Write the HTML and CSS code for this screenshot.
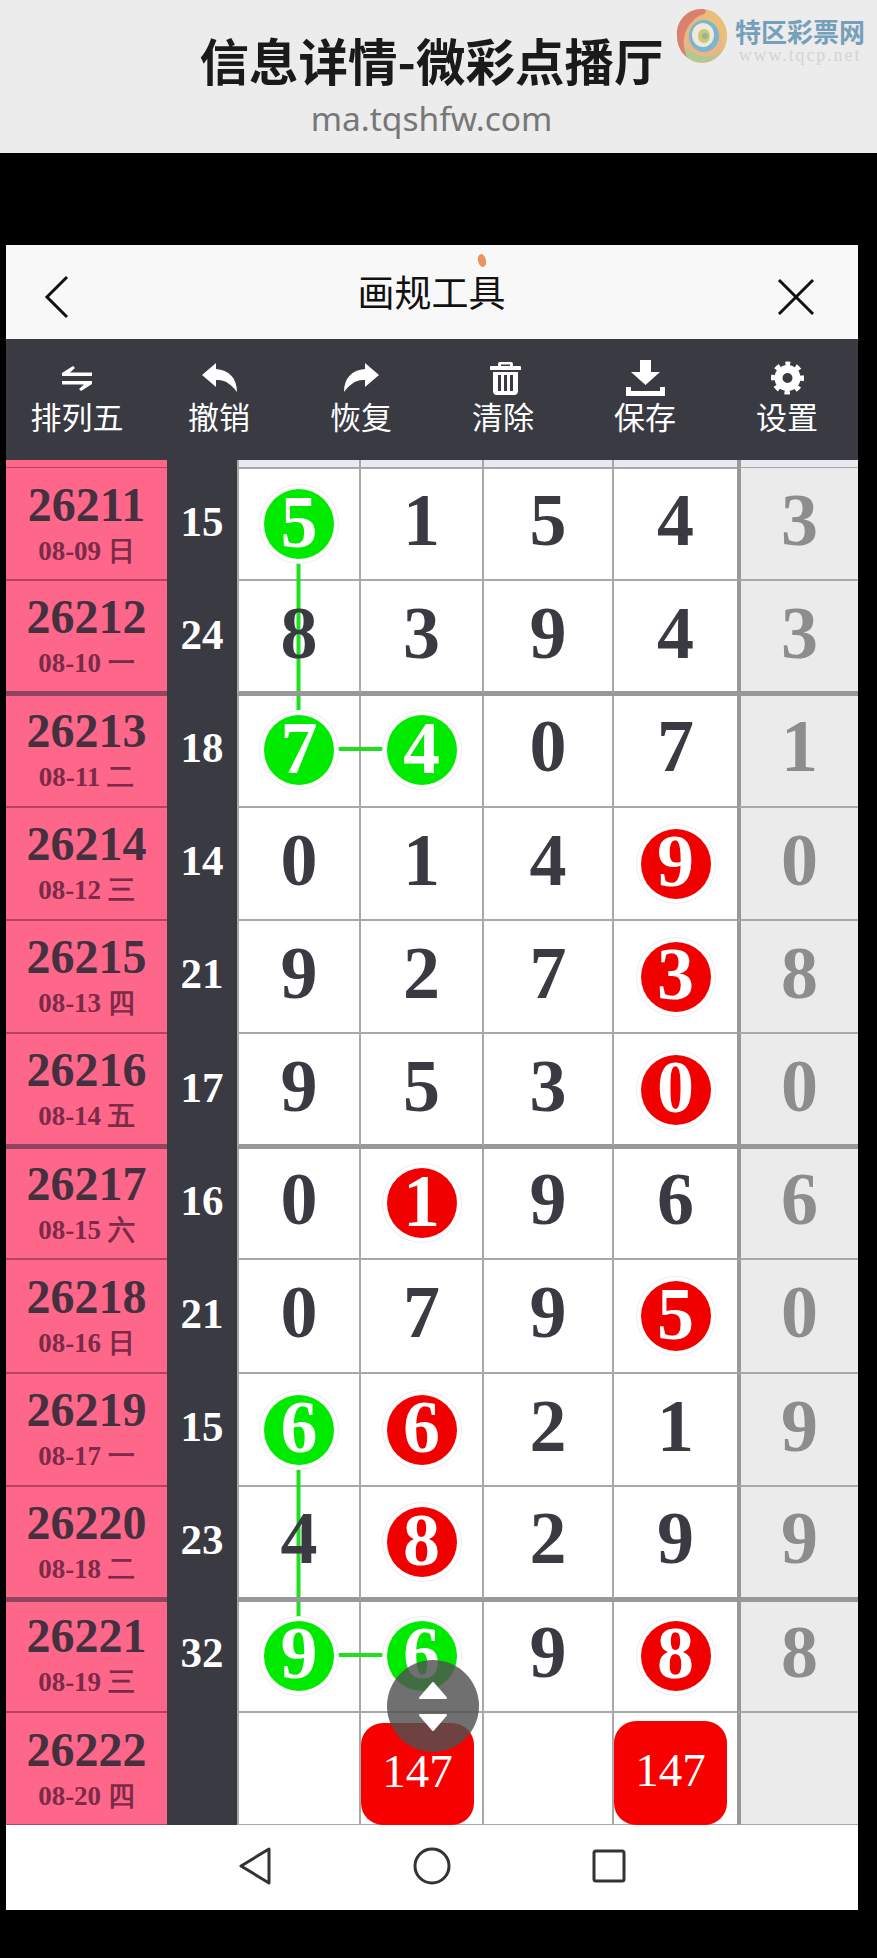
FILE: index.html
```html
<!DOCTYPE html>
<html>
<head>
    <title>画规工具</title>
    <link rel="stylesheet" href="styles.css">
</head>
<body>
    <header class="site-header">
        <h1 class="site-title">信息详情-微彩点播厅</h1>
        <p class="site-url">ma.tqshfw.com</p>
        <div class="watermark">
            <svg class="watermark-swirl" width="52" height="56" viewBox="0 0 52 56">
                <ellipse cx="26" cy="28" rx="25" ry="27" fill="#e8b27a"/>
                <path d="M28 1C10 0 0 14 1 28c0 10 5 18 11 22C6 40 6 26 14 16c4-5 10-10 18-11z" fill="#d8765f"/>
                <path d="M30 3c12 2 21 12 21 25 0 6-2 10-4 14 1-12-5-26-21-30z" fill="#e9bb6e"/>
                <path d="M10 48c10 10 28 8 37-6-7 8-23 10-37-2z" fill="#a9c68b"/>
                <ellipse cx="28" cy="28" rx="15" ry="16" fill="#6fb0d0"/>
                <ellipse cx="27" cy="27" rx="11" ry="12" fill="#efe9d6"/>
                <ellipse cx="28" cy="28" rx="6" ry="7" fill="#c9c36c"/>
                <circle cx="29" cy="28" r="3" fill="#8db08a"/>
            </svg>
            <div class="watermark-text">
                <span class="watermark-name">特区彩票网</span>
                <span class="watermark-site">www.tqcp.net</span>
            </div>
        </div>
    </header>

    <div class="gap-top"></div>

    <div class="app">
        <div class="title-bar">
            <svg class="nav-icon" width="26" height="44" viewBox="0 0 26 44">
                <path d="M23 2 3 22l20 20" fill="none" stroke="#111" stroke-width="3"/>
            </svg>
            <span class="title-text">画规工具</span>
            <svg class="nav-icon" width="38" height="38" viewBox="0 0 38 38">
                <path d="M2 2l34 34M36 2 2 36" fill="none" stroke="#111" stroke-width="3"/>
            </svg>
            <span class="title-dot"></span>
        </div>

        <div class="toolbar">
            <div class="tool">
                <svg width="40" height="38" viewBox="0 0 40 38">
                    <path d="M16 8 5 15v3h30v-3.500H13l5-4.500zM24 33l11-7v-3H5v3.500h22l-5 4.500z" fill="#fff"/>
                </svg>
                <span>排列五</span>
            </div>
            <div class="tool">
                <svg width="40" height="38" viewBox="0 0 40 38">
                    <path d="M17 5 3 17l14 12v-7c9-1 16 5 21 12 0-14-8-22-21-23z" fill="#fff"/>
                </svg>
                <span>撤销</span>
            </div>
            <div class="tool">
                <svg width="40" height="38" viewBox="0 0 40 38">
                    <path d="M24 5l14 12-14 12v-7c-9-1-16 5-21 12 0-14 8-22 21-23z" fill="#fff"/>
                </svg>
                <span>恢复</span>
            </div>
            <div class="tool">
                <svg width="40" height="38" viewBox="0 0 40 38">
                    <path fill-rule="evenodd" d="M17 4h11a2 2 0 0 1 2 2v2h7a1 1 0 0 1 1 1v3H7V9a1 1 0 0 1 1-1h7V6a2 2 0 0 1 2-2zm1 2.500V8h9V6.500zM10 14h25v19a4 4 0 0 1-4 4H14a4 4 0 0 1-4-4zm5 3v16h3V17zm6 0v16h3V17zm6 0v16h3V17z" fill="#fff"/>
                </svg>
                <span>清除</span>
            </div>
            <div class="tool">
                <svg width="40" height="38" viewBox="0 0 40 38">
                    <path d="M15 2h11v12h9L20.500 27 6 14h9zM1 29h5v4h29v-4h5v9H1z" fill="#fff"/>
                </svg>
                <span>保存</span>
            </div>
            <div class="tool">
                <svg width="40" height="38" viewBox="0 0 40 38">
                    <circle cx="20.500" cy="20" r="9" fill="none" stroke="#fff" stroke-width="8"/>
                    <circle cx="20.500" cy="20" r="14.500" fill="none" stroke="#fff" stroke-width="4" stroke-dasharray="5.500 5.890" stroke-dashoffset="2.750" transform="rotate(-90 20.500 20)"/>
                </svg>
                <span>设置</span>
            </div>
        </div>

        <div class="chart">
            <div class="row row-cut">
                <div class="issue"></div><div class="sum"></div>
                <div class="cell"></div><div class="cell"></div><div class="cell"></div><div class="cell"></div><div class="cell cell-last"></div>
            </div>
            <div class="row">
                <div class="issue"><b>26211</b><small>08-09 日</small></div><div class="sum">15</div>
                <div class="cell"><i class="ball ball-green">5</i></div><div class="cell">1</div><div class="cell">5</div><div class="cell">4</div><div class="cell cell-last">3</div>
            </div>
            <div class="row row-thick">
                <div class="issue"><b>26212</b><small>08-10 一</small></div><div class="sum">24</div>
                <div class="cell">8</div><div class="cell">3</div><div class="cell">9</div><div class="cell">4</div><div class="cell cell-last">3</div>
            </div>
            <div class="row">
                <div class="issue"><b>26213</b><small>08-11 二</small></div><div class="sum">18</div>
                <div class="cell"><i class="ball ball-green">7</i></div><div class="cell"><i class="ball ball-green">4</i></div><div class="cell">0</div><div class="cell">7</div><div class="cell cell-last">1</div>
            </div>
            <div class="row">
                <div class="issue"><b>26214</b><small>08-12 三</small></div><div class="sum">14</div>
                <div class="cell">0</div><div class="cell">1</div><div class="cell">4</div><div class="cell"><i class="ball ball-red">9</i></div><div class="cell cell-last">0</div>
            </div>
            <div class="row">
                <div class="issue"><b>26215</b><small>08-13 四</small></div><div class="sum">21</div>
                <div class="cell">9</div><div class="cell">2</div><div class="cell">7</div><div class="cell"><i class="ball ball-red">3</i></div><div class="cell cell-last">8</div>
            </div>
            <div class="row row-thick">
                <div class="issue"><b>26216</b><small>08-14 五</small></div><div class="sum">17</div>
                <div class="cell">9</div><div class="cell">5</div><div class="cell">3</div><div class="cell"><i class="ball ball-red">0</i></div><div class="cell cell-last">0</div>
            </div>
            <div class="row">
                <div class="issue"><b>26217</b><small>08-15 六</small></div><div class="sum">16</div>
                <div class="cell">0</div><div class="cell"><i class="ball ball-red">1</i></div><div class="cell">9</div><div class="cell">6</div><div class="cell cell-last">6</div>
            </div>
            <div class="row">
                <div class="issue"><b>26218</b><small>08-16 日</small></div><div class="sum">21</div>
                <div class="cell">0</div><div class="cell">7</div><div class="cell">9</div><div class="cell"><i class="ball ball-red">5</i></div><div class="cell cell-last">0</div>
            </div>
            <div class="row">
                <div class="issue"><b>26219</b><small>08-17 一</small></div><div class="sum">15</div>
                <div class="cell"><i class="ball ball-green">6</i></div><div class="cell"><i class="ball ball-red">6</i></div><div class="cell">2</div><div class="cell">1</div><div class="cell cell-last">9</div>
            </div>
            <div class="row row-thick">
                <div class="issue"><b>26220</b><small>08-18 二</small></div><div class="sum">23</div>
                <div class="cell">4</div><div class="cell"><i class="ball ball-red">8</i></div><div class="cell">2</div><div class="cell">9</div><div class="cell cell-last">9</div>
            </div>
            <div class="row">
                <div class="issue"><b>26221</b><small>08-19 三</small></div><div class="sum">32</div>
                <div class="cell"><i class="ball ball-green">9</i></div><div class="cell"><i class="ball ball-green">6</i></div><div class="cell">9</div><div class="cell"><i class="ball ball-red">8</i></div><div class="cell cell-last">8</div>
            </div>
            <div class="row">
                <div class="issue"><b>26222</b><small>08-20 四</small></div><div class="sum"></div>
                <div class="cell"></div><div class="cell"><span class="pick">147</span></div><div class="cell"></div><div class="cell"><span class="pick pick-high">147</span></div><div class="cell cell-last"></div>
            </div>

            <svg class="lines" width="852" height="1365" viewBox="0 0 852 1365">
                <path d="M292.500 102V250M332 289H378M292.500 1010V1159M332 1195H378" fill="none" stroke="#1fe01f" stroke-width="4"/>
            </svg>

            <div class="float-btn">
                <svg width="30" height="19" viewBox="0 0 30 19">
                    <path d="M15 2 28 17H2z" fill="#fff" stroke="#fff" stroke-width="2" stroke-linejoin="round"/>
                </svg>
                <svg width="30" height="19" viewBox="0 0 30 19">
                    <path d="M15 17 28 2H2z" fill="#fff" stroke="#fff" stroke-width="2" stroke-linejoin="round"/>
                </svg>
            </div>
        </div>

        <div class="nav-bar">
            <svg width="32" height="38" viewBox="0 0 32 38">
                <path d="M30 2v34L2 19z" fill="none" stroke="#333" stroke-width="3" stroke-linejoin="round"/>
            </svg>
            <svg width="38" height="38" viewBox="0 0 38 38">
                <circle cx="19" cy="19" r="17" fill="none" stroke="#333" stroke-width="3"/>
            </svg>
            <svg width="34" height="34" viewBox="0 0 34 34">
                <rect x="2" y="2" width="30" height="30" rx="2" fill="none" stroke="#333" stroke-width="3"/>
            </svg>
        </div>
    </div>
</body>
</html>
```

FILE: styles.css
```css
* {
    box-sizing: border-box;
}

body {
    margin: 0;
    background-color: #000;
    font-family: "Noto Sans", "Noto Sans CJK SC", sans-serif;
}

.site-header {
    position: relative;
    height: 153px;
    padding: 24px 14px 0 0;
    background-color: #ececec;
    text-align: center;
}

.site-title {
    width: fit-content;
    margin: 0 auto;
    font-family: "Noto Sans CJK SC", sans-serif;
    font-size: 49.5px;
    line-height: 71px;
    font-weight: 700;
    color: #1a1a1a;
}

.site-url {
    margin: 0;
    font-size: 33.5px;
    line-height: 46px;
    color: #777;
}

.watermark {
    position: absolute;
    top: 8px;
    left: 676px;
    display: flex;
    gap: 7px;
    opacity: 0.9;
}

.watermark-text {
    display: flex;
    flex-direction: column;
    padding-top: 7px;
}

.watermark-name {
    font-family: "Noto Sans CJK SC", sans-serif;
    font-size: 26px;
    line-height: 31px;
    font-weight: 700;
    color: #6a97b5;
    white-space: nowrap;
}

.watermark-site {
    font-family: "Liberation Serif", serif;
    font-size: 18px;
    line-height: 18px;
    letter-spacing: 1.9px;
    color: #d2d2d2;
    white-space: nowrap;
}

.gap-top {
    height: 92px;
}

.app {
    width: 852px;
    margin-left: 6px;
}

.title-bar {
    position: relative;
    display: flex;
    align-items: center;
    justify-content: space-between;
    height: 94px;
    padding: 0 43px 0 38px;
    background-color: #f8f8f8;
}

.nav-icon {
    margin-top: 10px;
}

.title-text {
    padding: 0 0 3px 16px;
    font-family: "Noto Sans CJK SC", sans-serif;
    font-size: 37px;
    font-weight: 400;
    color: #111;
}

.title-dot {
    position: absolute;
    top: 9px;
    left: 472px;
    width: 8px;
    height: 13px;
    border-radius: 50%;
    background-color: #e8945c;
    transform: rotate(-12deg);
}

.toolbar {
    display: grid;
    grid-template-columns: repeat(6, 1fr);
    height: 121px;
    padding-top: 19px;
    background-color: #3a3a42;
}

.tool {
    display: flex;
    flex-direction: column;
    align-items: center;
    color: #fff;
    font-family: "Noto Sans CJK SC", sans-serif;
    font-size: 31px;
    line-height: 40px;
}

.chart {
    position: relative;
    height: 1365px;
    overflow: hidden;
    background-color: #fff;
}

.row {
    display: grid;
    grid-template-columns: 161px 70px 124px 123px 130px 123px 121px;
    height: 113.2px;
    font-family: "Liberation Serif", serif;
    font-weight: 700;
}

.row-cut {
    height: 8px;
}

.row-cut .cell {
    background-color: #e9e9f2;
}

.issue {
    display: flex;
    flex-direction: column;
    align-items: center;
    justify-content: center;
    padding-bottom: 3px;
    background-color: #fe6789;
    border-bottom: 2px solid #b5425f;
    color: #44303f;
}

.issue b {
    font-size: 48px;
    line-height: 54px;
}

.issue small {
    margin-top: 3px;
    font-size: 27px;
    line-height: 32px;
    color: #7b2a48;
}

.sum {
    display: flex;
    align-items: center;
    justify-content: center;
    padding-bottom: 7px;
    background-color: #3a3a42;
    color: #fff;
    font-size: 43px;
}

.cell {
    position: relative;
    display: flex;
    align-items: center;
    justify-content: center;
    padding-bottom: 7px;
    border-right: 2px solid #a8a8a8;
    border-bottom: 2px solid #a8a8a8;
    color: #3a3a42;
    font-size: 74px;
    line-height: 1;
}

.cell:nth-child(3) {
    border-left: 2px solid #a8a8a8;
}

.cell:nth-child(6) {
    border-right: none;
}

.cell-last {
    border-left: 4px solid #989898;
    border-right: none;
    background-color: #ebebeb;
    color: #8d8d8d;
}

.row-thick .issue {
    position: relative;
    z-index: 1;
    border-bottom: 3px solid #8f4560;
    box-shadow: 0 2px 0 #8f4560;
}

.row-thick .cell {
    z-index: 1;
    border-bottom: 3px solid #989898;
    box-shadow: 0 2px 0 #989898;
}

.ball {
    position: relative;
    z-index: 1;
    display: flex;
    align-items: center;
    justify-content: center;
    width: 70px;
    height: 70px;
    margin-bottom: -8px;
    padding-bottom: 5px;
    border-radius: 50%;
    box-shadow: 0 0 0 4px #fff, 0 0 0 5px #eee;
    color: #fff;
    font-style: normal;
}

.ball-green {
    background-color: #00ea00;
}

.ball-red {
    background-color: #f10000;
}

.pick {
    position: absolute;
    top: 10px;
    left: 0;
    display: flex;
    align-items: center;
    justify-content: center;
    width: 113px;
    height: 102px;
    padding-bottom: 6px;
    border-radius: 22px;
    background-color: #f60000;
    color: #fff;
    font-size: 47px;
    font-weight: 400;
}

.pick-high {
    top: 8px;
    height: 104px;
}

.lines {
    position: absolute;
    top: 0;
    left: 0;
}

.float-btn {
    position: absolute;
    top: 1200px;
    left: 381px;
    z-index: 2;
    display: flex;
    flex-direction: column;
    align-items: center;
    justify-content: center;
    gap: 13px;
    width: 92px;
    height: 92px;
    border-radius: 50%;
    background-color: rgba(80, 80, 80, 0.82);
}

.nav-bar {
    display: grid;
    grid-template-columns: repeat(3, 177px);
    justify-content: center;
    justify-items: center;
    align-items: center;
    height: 85px;
    padding-bottom: 3px;
    background-color: #fff;
}
```
